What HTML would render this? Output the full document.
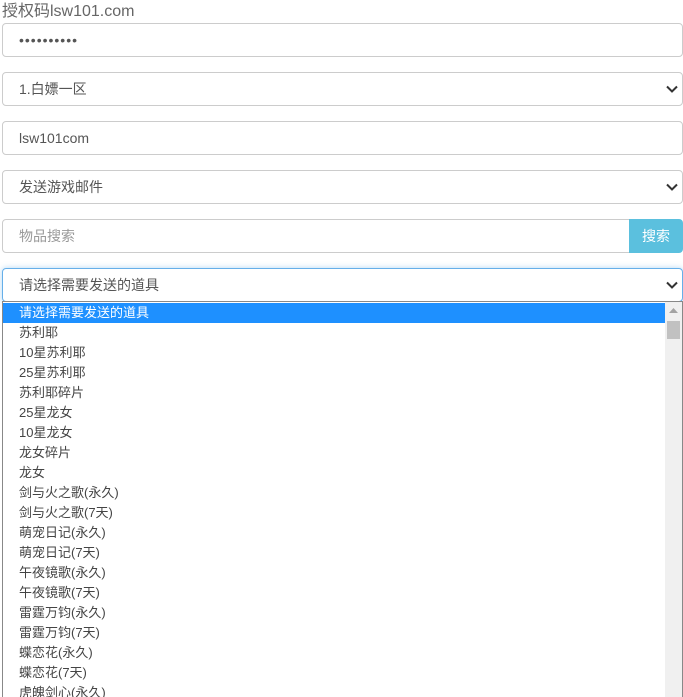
<!DOCTYPE html>
<html><head><meta charset="utf-8"><style>
*{box-sizing:border-box;margin:0;padding:0}
html{width:683px;height:697px;overflow:hidden}
body{width:683px;height:697px;overflow:hidden;background:#fff;font-family:"Liberation Sans","Noto Sans CJK SC",sans-serif;color:#555;position:relative}
.lbl{position:absolute;left:2px;top:2px;font-size:16px;color:#666;line-height:20px}
.f{position:absolute;left:2px;width:681px;height:34px;border:1px solid #ccc;border-radius:4px;font-size:14px;line-height:32px;padding-left:16px;color:#555}
.f.ph{color:#999}
.chev{position:absolute;right:4px;top:12px;width:12px;height:8px}
.btn{position:absolute;left:629px;top:219px;width:54px;height:34px;background:#5bc0de;border-radius:0 4px 4px 0;color:#fff;font-size:14px;line-height:34px;text-align:center}
.list{position:absolute;left:2px;top:301px;width:681px;height:396px;border:1px solid #888;border-bottom:none;background:#fff;overflow:hidden;padding-top:1px}
.it{height:20px;line-height:20px;font-size:13px;color:#444;padding-left:16px}
.it.sel{background:#1e90ff;color:#fff;width:662px}
.sb{position:absolute;right:0;top:0;width:17px;height:100%;background:#f0f0f0}
.thumb{position:absolute;left:2px;top:19px;width:13px;height:18px;background:#c1c1c1}
</style></head><body>
<div class="lbl">授权码lsw101.com</div>
<div class="f" style="top:23px;letter-spacing:1px">••••••••••</div>
<div class="f" style="top:72px">1.白嫖一区<svg class="chev" viewBox="0 0 12 8"><path d="M1 1.5l5 5 5-5" stroke="#333" stroke-width="2" fill="none"/></svg></div>
<div class="f" style="top:121px">lsw101com</div>
<div class="f" style="top:170px">发送游戏邮件<svg class="chev" viewBox="0 0 12 8"><path d="M1 1.5l5 5 5-5" stroke="#333" stroke-width="2" fill="none"/></svg></div>
<div class="f ph" style="top:219px;width:628px;border-radius:4px 0 0 4px">物品搜索</div>
<div class="btn">搜索</div>
<div class="f" style="top:268px;border-color:#66afe9;box-shadow:0 0 6px rgba(102,175,233,.5)">请选择需要发送的道具<svg class="chev" viewBox="0 0 12 8"><path d="M1 1.5l5 5 5-5" stroke="#333" stroke-width="2" fill="none"/></svg></div>
<div class="list">
<div class="it sel">请选择需要发送的道具</div>
<div class="it">苏利耶</div>
<div class="it">10星苏利耶</div>
<div class="it">25星苏利耶</div>
<div class="it">苏利耶碎片</div>
<div class="it">25星龙女</div>
<div class="it">10星龙女</div>
<div class="it">龙女碎片</div>
<div class="it">龙女</div>
<div class="it">剑与火之歌(永久)</div>
<div class="it">剑与火之歌(7天)</div>
<div class="it">萌宠日记(永久)</div>
<div class="it">萌宠日记(7天)</div>
<div class="it">午夜镜歌(永久)</div>
<div class="it">午夜镜歌(7天)</div>
<div class="it">雷霆万钧(永久)</div>
<div class="it">雷霆万钧(7天)</div>
<div class="it">蝶恋花(永久)</div>
<div class="it">蝶恋花(7天)</div>
<div class="it">虎魄剑心(永久)</div>
<div class="sb"><svg style="position:absolute;left:4px;top:6px" width="9" height="5"><path d="M0 5L4.5 0 9 5z" fill="#a3a3a3"/></svg><div class="thumb"></div></div>
</div>
</body></html>
